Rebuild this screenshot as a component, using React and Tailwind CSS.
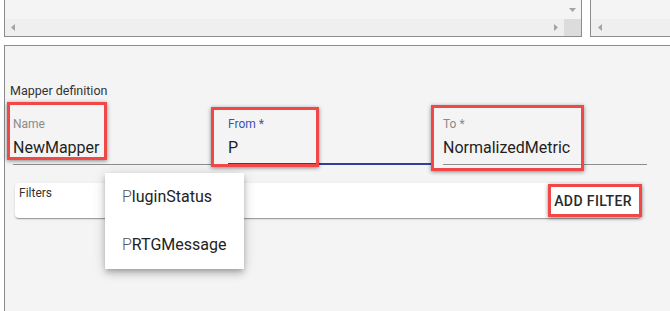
export default function App() {
  const Tri = ({ dir }) => {
    const pts = {
      down: "0,0 7,0 3.5,4",
      left: "4,0 4,7 0,3.5",
      right: "0,0 0,7 4,3.5",
    }[dir];
    const w = dir === "down" ? 7 : 4;
    const h = dir === "down" ? 4 : 7;
    return (
      <svg width={w} height={h} viewBox={`0 0 ${w} ${h}`} className="block">
        <polygon points={pts} fill="#a3a3a3" />
      </svg>
    );
  };

  return (
    <div className="relative w-[670px] h-[311px] overflow-hidden bg-white flex flex-col font-[Roboto,sans-serif]">
      {/* top panels */}
      <div className="flex h-[37px] pl-[4px] gap-[8px] shrink-0">
        <div className="w-[578px] border-x border-b border-[#8c8c8c] bg-[#f4f4f4] flex flex-col">
          <div className="flex flex-1">
            <div className="flex-1" />
            <div className="w-[17px] flex justify-center pt-[8px]">
              <Tri dir="down" />
            </div>
          </div>
          <div className="flex h-[17px]">
            <div className="flex-1 bg-[#efefef] flex items-center justify-between pl-[6px] pr-[6px]">
              <Tri dir="left" />
              <Tri dir="right" />
            </div>
            <div className="w-[17px] bg-[#dcdcdc]" />
          </div>
        </div>
        <div className="flex-1 border-l border-b border-[#8c8c8c] bg-[#f4f4f4] flex flex-col">
          <div className="flex-1" />
          <div className="h-[17px] bg-[#efefef] flex items-center pl-[7px]">
            <Tri dir="left" />
          </div>
        </div>
      </div>

      {/* main panel */}
      <div className="ml-[4px] mt-[8px] flex-1 border-l border-t border-[#8c8c8c] bg-[#f4f4f4] pt-[37px]">
        <div className="pl-[5px] text-[12.5px] leading-[16px] text-[#333]">Mapper definition</div>
        <div className="mt-[17px] pl-[8px] flex gap-[11px]">
          <div className="w-[204px]">
            <div className="text-[12px] leading-[16px] text-[#8a8a8a]">Name</div>
            <div className="mt-[4px] h-[29px] border-b border-[#8d8d8d] text-[16px] leading-[24px] text-[#1f1f1f]">
              NewMapper
            </div>
          </div>
          <div className="w-[204px]">
            <div className="text-[12px] leading-[16px] text-[#3f51b5]">From *</div>
            <div className="mt-[4px] h-[29px] border-b-2 border-[#303f9f] text-[16px] leading-[24px] text-[#1f1f1f]">
              P
            </div>
          </div>
          <div className="w-[204px]">
            <div className="text-[12px] leading-[16px] text-[#8a8a8a]">To *</div>
            <div className="mt-[4px] h-[29px] border-b border-[#8d8d8d] text-[16px] leading-[24px] text-[#1f1f1f]">
              NormalizedMetric
            </div>
          </div>
        </div>
        <div className="mt-[18px] ml-[10px] w-[626px] h-[35px] bg-white rounded-[4px] shadow-[0_2px_1px_-1px_rgba(0,0,0,0.2),0_1px_1px_0_rgba(0,0,0,0.14),0_1px_3px_0_rgba(0,0,0,0.12)] flex justify-between">
          <div className="pl-[4px] pt-[2px] text-[12px] leading-[16px] text-[#333]">Filters</div>
          <div className="self-center pr-[9px] text-[14px] leading-[24px] font-medium tracking-[0.4px] text-[#2a2a2a]">
            ADD FILTER
          </div>
        </div>
      </div>

      {/* dropdown */}
      <div className="absolute left-[105px] top-[173px] w-[139px] bg-white shadow-[0_3px_5px_-1px_rgba(0,0,0,0.2),0_5px_8px_0_rgba(0,0,0,0.14),0_1px_14px_0_rgba(0,0,0,0.12)]">
        <div className="h-[48px] flex items-center pl-[17px] text-[16px] text-[#222]">
          <span className="font-light text-[#555]">P</span>
          <span>luginStatus</span>
        </div>
        <div className="h-[48px] flex items-center pl-[17px] text-[16px] text-[#222]">
          <span className="font-light text-[#555]">P</span>
          <span>RTGMessage</span>
        </div>
      </div>

      {/* annotation boxes */}
      <div className="absolute left-[7px] top-[102px] w-[100px] h-[58px] border-[3px] border-[#f24747] shadow-[0_1px_4px_rgba(0,0,0,0.45)]" />
      <div className="absolute left-[211px] top-[107px] w-[108px] h-[60px] border-[3px] border-[#f24747] shadow-[0_1px_4px_rgba(0,0,0,0.45)]" />
      <div className="absolute left-[431px] top-[105px] w-[153px] h-[66px] border-[3px] border-[#f24747] shadow-[0_1px_4px_rgba(0,0,0,0.45)]" />
      <div className="absolute left-[548px] top-[184px] w-[94px] h-[33px] border-[3px] border-[#f24747] shadow-[0_1px_4px_rgba(0,0,0,0.45)]" />
    </div>
  );
}
